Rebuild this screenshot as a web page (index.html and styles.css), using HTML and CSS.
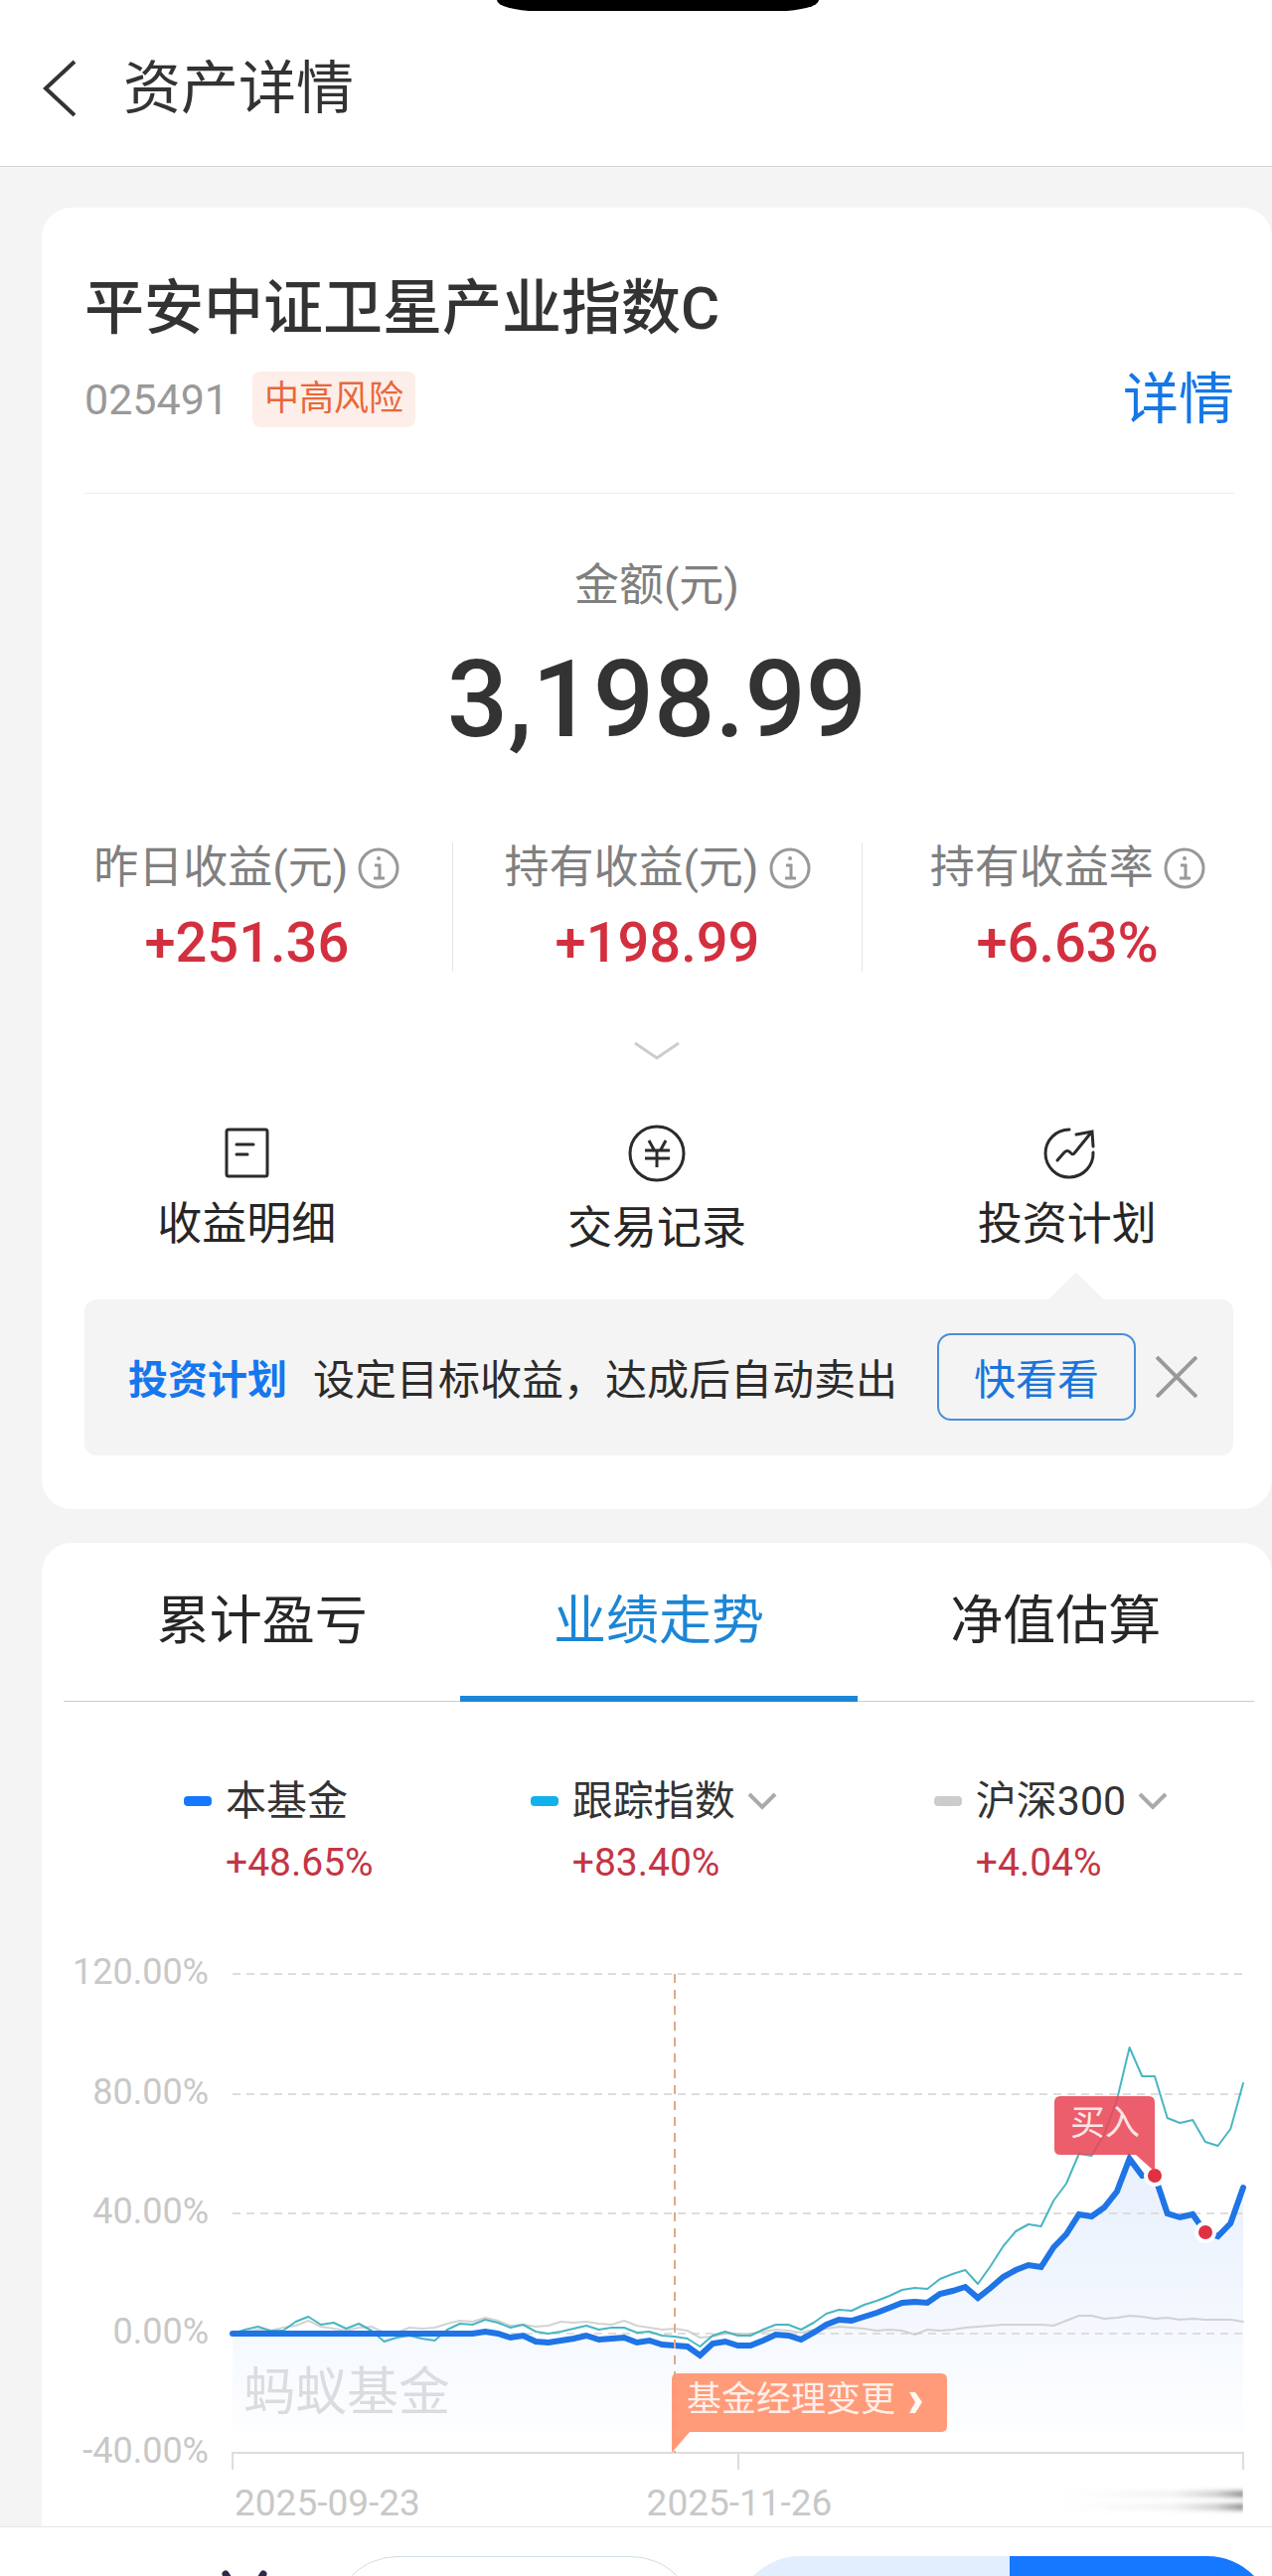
FILE: index.html
```html
<!DOCTYPE html>
<html lang="zh-CN">
<head>
<meta charset="utf-8">
<meta name="viewport" content="width=device-width, initial-scale=1">
<title>资产详情</title>
<link rel="stylesheet" href="styles.css">
</head>
<body>
<div class="island"></div>
<header class="topbar">
  <button class="icon-button back" type="button" aria-label="返回">
    <svg width="36" height="58" viewBox="0 0 36 58"><path d="M33 2L4 29L33 56" fill="none" stroke="#333" stroke-width="4"/></svg>
  </button>
  <h1 class="topbar-title">资产详情</h1>
</header>

<main class="page">
  <section class="card">
    <div class="fund">
      <h2 class="fund-name">平安中证卫星产业指数C</h2>
      <div class="fund-meta">
        <span class="fund-code">025491</span>
        <span class="risk">中高风险</span>
        <a class="detail-link" href="#detail">详情</a>
      </div>
    </div>

    <div class="amount">
      <div class="amount-label">金额(元)</div>
      <div class="amount-value">3,198.99</div>
    </div>

    <div class="columns stats">
      <div class="stat">
        <div class="stat-label">昨日收益(元)
          <svg class="info" viewBox="0 0 42 42"><circle cx="21" cy="21" r="19"/><path d="M17 18h5v13M16 31h11"/><circle class="dot" cx="21" cy="11" r="2"/></svg>
        </div>
        <div class="stat-value">+251.36</div>
      </div>
      <div class="stat">
        <div class="stat-label">持有收益(元)
          <svg class="info" viewBox="0 0 42 42"><circle cx="21" cy="21" r="19"/><path d="M17 18h5v13M16 31h11"/><circle class="dot" cx="21" cy="11" r="2"/></svg>
        </div>
        <div class="stat-value">+198.99</div>
      </div>
      <div class="stat">
        <div class="stat-label">持有收益率
          <svg class="info" viewBox="0 0 42 42"><circle cx="21" cy="21" r="19"/><path d="M17 18h5v13M16 31h11"/><circle class="dot" cx="21" cy="11" r="2"/></svg>
        </div>
        <div class="stat-value">+6.63%</div>
      </div>
    </div>

    <button class="icon-button expand" type="button" aria-label="展开">
      <svg width="46" height="18" viewBox="0 0 46 18"><path d="M1 1L23 16L45 1" fill="none" stroke="#ccc" stroke-width="3"/></svg>
    </button>

    <nav class="columns actions">
      <a class="action" href="#income">
        <svg width="60" height="60" viewBox="0 0 60 60"><rect x="10" y="6" width="41" height="47" rx="2"/><path d="M20 21h17M20 31h11" stroke-linecap="round"/></svg>
        <span>收益明细</span>
      </a>
      <a class="action" href="#trades">
        <svg width="60" height="64" viewBox="0 0 60 64"><circle cx="30" cy="30" r="27"/><path d="M22 17L28 28M39 17L33 28M18 27h25M18 35h25M30 27v17"/></svg>
        <span>交易记录</span>
      </a>
      <a class="action" href="#plan">
        <svg width="60" height="60" viewBox="0 0 60 60"><path d="M32 6A24 24 0 1 0 56 29M39 11L55 8L56 23M54 9L37 30Q35 32 33 29Q30 26 27 29L20 37" stroke-linecap="round"/></svg>
        <span>投资计划</span>
      </a>
    </nav>

    <div class="tip">
      <strong class="tip-title">投资计划</strong>
      <span class="tip-text">设定目标收益，达成后自动卖出</span>
      <button class="tip-button" type="button">快看看</button>
      <button class="icon-button tip-close" type="button" aria-label="关闭">
        <svg width="42" height="42" viewBox="0 0 42 42"><path d="M1 1L41 41M41 1L1 41" fill="none" stroke="#999" stroke-width="4"/></svg>
      </button>
    </div>
  </section>

  <section class="card performance">
    <div class="tabs" role="tablist">
      <button class="tab" type="button" role="tab" aria-selected="false">累计盈亏</button>
      <button class="tab active" type="button" role="tab" aria-selected="true">业绩走势</button>
      <button class="tab" type="button" role="tab" aria-selected="false">净值估算</button>
    </div>

    <div class="legend">
      <div class="series">
        <i class="swatch fund-swatch"></i>
        <span class="series-name">本基金</span>
        <span class="series-value">+48.65%</span>
      </div>
      <div class="series">
        <i class="swatch index-swatch"></i>
        <span class="series-name">跟踪指数
          <svg width="30" height="18" viewBox="0 0 30 18"><path d="M2 2L15 15L28 2"/></svg></span>
        <span class="series-value">+83.40%</span>
      </div>
      <div class="series">
        <i class="swatch csi-swatch"></i>
        <span class="series-name">沪深300
          <svg width="30" height="18" viewBox="0 0 30 18"><path d="M2 2L15 15L28 2"/></svg></span>
        <span class="series-value">+4.04%</span>
      </div>
    </div>

    <svg class="chart" viewBox="42 1930 1238 613" role="img" aria-label="业绩走势">
      <defs>
        <linearGradient id="area" gradientUnits="userSpaceOnUse" x1="0" y1="2170" x2="0" y2="2450">
          <stop offset="0" stop-color="#e8f0fd"/>
          <stop offset="0.6" stop-color="#f4f8fe"/>
          <stop offset="1" stop-color="#fdfeff"/>
        </linearGradient>
        <linearGradient id="fade">
          <stop offset="0" stop-color="#999" stop-opacity="0"/>
          <stop offset="0.6" stop-color="#999" stop-opacity="0.12"/>
          <stop offset="0.85" stop-color="#888" stop-opacity="0.4"/>
          <stop offset="1" stop-color="#888" stop-opacity="0.9"/>
        </linearGradient>
        <filter id="soft" x="-10%" y="-50%" width="110%" height="200%"><feGaussianBlur stdDeviation="1 2"/></filter>
      </defs>
      <polygon id="fund-area" fill="url(#area)"/>
      <path class="grid" d="M234 1987H1251M234 2108H1251M234 2228H1251M234 2349H1251"/>
      <path class="axis" d="M234 2486V2469H1251V2486M743 2469V2486"/>
      <g class="axis-label" text-anchor="end">
        <text x="210" y="1997">120.00%</text>
        <text x="210" y="2118">80.00%</text>
        <text x="210" y="2238">40.00%</text>
        <text x="210" y="2359">0.00%</text>
        <text x="210" y="2479">-40.00%</text>
      </g>
      <g class="axis-label date">
        <text x="236" y="2532">2025-09-23</text>
        <text x="744" y="2532" text-anchor="middle">2025-11-26</text>
      </g>
      <g filter="url(#soft)">
        <rect x="1070" y="2507" width="181" height="7" fill="url(#fade)"/>
        <rect x="1070" y="2520" width="181" height="7" fill="url(#fade)"/>
      </g>
      <text class="watermark" x="245" y="2426">蚂蚁基金</text>
      <polyline id="csi-line" class="line csi-line"/>
      <polyline id="index-line" class="line index-line"/>
      <polyline id="fund-line" class="line fund-line"/>
      <path class="event-line" d="M679 1987V2469"/>
      <g class="trade-dot">
        <circle cx="1162" cy="2190" r="9"/>
        <circle cx="1213" cy="2247" r="9"/>
      </g>
      <g class="tag buy-tag">
        <path d="M1067 2110H1156Q1162 2110 1162 2116V2186L1143 2169H1067Q1061 2169 1061 2163V2116Q1061 2110 1067 2110Z"/>
        <text x="1077" y="2149">买入</text>
      </g>
      <g class="tag manager-tag">
        <path d="M682 2389H947Q953 2389 953 2395V2442Q953 2448 947 2448H694L676 2469V2395Q676 2389 682 2389Z"/>
        <text x="691" y="2427">基金经理变更</text>
        <path class="arrow" d="M915 2408H921L928 2418L921 2429H915L921 2418Z"/>
      </g>
    </svg>
  </section>
</main>

<footer class="bottombar">
  <button class="icon-button mascot" type="button" aria-label="客服">
    <svg width="50" height="60" viewBox="0 0 50 60"><path d="M6 4L20 26M44 4L30 26" fill="none" stroke="#2b2b4a" stroke-width="7" stroke-linecap="round"/></svg>
  </button>
  <button class="pill outline" type="button" aria-label="卖出"></button>
  <div class="pill-pair">
    <button class="half light" type="button" aria-label="定投"></button>
    <button class="half solid" type="button" aria-label="买入"></button>
  </div>
</footer>
<script src="chart.js"></script>
</body>
</html>
```
FILE: styles.css
```css
* { box-sizing: border-box; }

body {
  margin: 0;
  background: #f4f4f4;
  color: #333;
  font-family: Roboto, "Noto Sans CJK SC", sans-serif;
}

h1, h2 { margin: 0; font-weight: 400; }
a { color: inherit; text-decoration: none; }
button { font: inherit; color: inherit; }
svg { display: block; flex: none; }

.icon-button {
  display: block;
  padding: 0;
  border: 0;
  background: none;
}

.island {
  position: absolute;
  top: 0;
  left: 500px;
  width: 324px;
  height: 11px;
  background: #000;
  border-radius: 0 0 40px 40px / 0 0 11px 11px;
}

.topbar {
  display: flex;
  align-items: center;
  gap: 46px;
  padding: 47px 42px 36px;
  background: #fff;
  border-bottom: 1px solid #d4d4d4;
}
.topbar-title { font-size: 58px; line-height: 84px; }

.page { padding: 41px 0 0 42px; }

.card {
  padding: 62px 0 54px;
  background: #fff;
  border-radius: 30px;
}

.fund {
  margin: 0 38px 0 43px;
  padding-bottom: 66px;
  border-bottom: 1px solid #eee;
}
.fund-name { font-size: 60px; line-height: 80px; font-weight: 500; }
.fund-meta {
  display: flex;
  align-items: center;
  gap: 24px;
  height: 56px;
  margin-top: 23px;
}
.fund-code { font-size: 43px; line-height: 60px; color: #999; }
.risk {
  padding: 0 12px;
  border-radius: 8px;
  background: #fdeee9;
  color: #e8683a;
  font-size: 35px;
  line-height: 56px;
}
.detail-link { margin-left: auto; color: #1677e6; font-size: 56px; line-height: 60px; }

.amount { margin-top: 61px; text-align: center; }
.amount-label { color: #808080; font-size: 45px; line-height: 64px; }
.amount-value { margin-top: 22px; font-size: 108px; line-height: 120px; font-weight: 500; }

.columns { display: grid; grid-template-columns: repeat(3, 1fr); }

.stats { margin-top: 84px; text-align: center; }
.stat + .stat { border-left: 1px solid #e6e6e6; }
.stat-label {
  display: flex;
  align-items: center;
  justify-content: center;
  gap: 10px;
  color: #808080;
  font-size: 45px;
  line-height: 52px;
}
.stat-value {
  margin-top: 20px;
  color: #d2303f;
  font-size: 56px;
  line-height: 58px;
  font-weight: 500;
}
.info { width: 42px; height: 42px; fill: none; stroke: #999; stroke-width: 3; }
.info .dot { fill: #999; stroke: none; }

.expand { margin: 71px auto 0; }

.actions { margin-top: 64px; }
.action {
  display: flex;
  flex-direction: column;
  align-items: center;
  gap: 12px;
  color: #262626;
  font-size: 45px;
  line-height: 60px;
}
.action svg { fill: none; stroke: #2b2b2b; stroke-width: 3; }

.tip {
  position: relative;
  display: flex;
  align-items: center;
  margin: 41px 39px 0 43px;
  padding: 34px 36px 35px 44px;
  border-radius: 12px;
  background: #f4f4f4;
  font-family: "Noto Sans CJK SC", sans-serif;
  line-height: 88px;
}
.tip::before {
  content: "";
  position: absolute;
  right: 130px;
  bottom: 100%;
  border: solid transparent;
  border-width: 0 28px 27px;
  border-bottom-color: #f4f4f4;
}
.tip-title { color: #1677ee; font-size: 40px; }
.tip-text { margin-left: 26px; color: #2b2b2b; font-size: 42px; white-space: nowrap; }
.tip-button {
  flex: none;
  width: 200px;
  margin-left: auto;
  padding: 0;
  border: 2px solid #4a90d9;
  border-radius: 14px;
  background: none;
  color: #1a74dc;
  font-size: 42px;
  line-height: 84px;
}
.tip-close { margin-left: 20px; }

.performance {
  margin-top: 34px;
  padding: 0;
  border-radius: 30px 30px 0 0;
}
.tabs {
  display: flex;
  margin: 0 18px 0 22px;
  box-shadow: inset 0 -1px #ccc;
}
.tab {
  flex: 1;
  padding: 39px 0 35px;
  border: 0;
  border-bottom: 6px solid transparent;
  background: none;
  color: #262626;
  font-size: 53px;
  line-height: 80px;
}
.tab.active { border-color: #1c86d6; color: #1c86d6; }

.legend {
  display: flex;
  justify-content: space-between;
  margin-top: 75px;
  padding: 0 105px 0 143px;
}
.series {
  display: grid;
  grid-template-columns: 28px auto;
  column-gap: 14px;
  row-gap: 12px;
  align-items: center;
  line-height: 50px;
}
.swatch { height: 10px; border-radius: 4px; }
.fund-swatch { background: #1677ff; }
.index-swatch { background: #12b0ec; }
.csi-swatch { background: #ccc; }
.series-name { display: flex; align-items: center; gap: 12px; font-size: 41px; }
.series-name svg { fill: none; stroke: #aaa; stroke-width: 4; }
.series-value { grid-column: 2; color: #c43545; font-size: 39px; }

.chart { width: 100%; height: auto; margin-top: 30px; }
.grid { fill: none; stroke: #ddd; stroke-width: 2; stroke-dasharray: 8 6; }
.axis { fill: none; stroke: #ddd; stroke-width: 2; }
.axis-label { fill: #c8c8c8; font-size: 36px; }
.date { font-size: 37px; }
.watermark { fill: #dadce0; font-size: 52px; }
.line { fill: none; stroke-linejoin: round; stroke-linecap: round; }
.csi-line { stroke: #c8c8c8; stroke-width: 2; stroke-opacity: 0.8; }
.index-line { stroke: #35aebb; stroke-width: 2; stroke-opacity: 0.9; }
.fund-line { stroke: #1f74e6; stroke-width: 6; stroke-linejoin: miter; }
.event-line { stroke: #e0a98c; stroke-width: 2; stroke-dasharray: 9 7; }
.trade-dot { fill: #e03142; stroke: #fff; stroke-width: 4; }
.tag text { font-size: 35px; fill: #fff; fill-opacity: 0.85; }
.buy-tag path { fill: #e94856; fill-opacity: 0.88; }
.manager-tag path { fill: #ff936f; fill-opacity: 0.93; }
.manager-tag .arrow { fill: #fff; }

.bottombar {
  display: flex;
  align-items: flex-start;
  height: 50px;
  padding: 29px 0 0 221px;
  overflow: hidden;
  background: #fff;
  border-top: 1px solid #e6e6e6;
}
.mascot { padding-top: 14px; }
.pill { height: 130px; border-radius: 65px; background: #fff; }
.outline { flex: 356; margin-left: 64px; border: 1px solid #cfdde3; }
.pill-pair {
  flex: 549;
  display: flex;
  height: 130px;
  margin-left: 40px;
  border-radius: 65px;
  overflow: hidden;
}
.half { border: 0; }
.light { flex: 281; background: #e2eefe; }
.solid { flex: 268; background: #1677ff; }
```
FILE: chart.js
```js
// Daily readings, in chart units on the vertical axis (0% is 2349, 40% is 2228).
const fund = [
  2349, 2349, 2349, 2349, 2349, 2349, 2349, 2349, 2349, 2349, 2349, 2349, 2349, 2349, 2349, 2349, 2349, 2349, 2349, 2349,
  2347, 2349, 2353, 2351, 2357, 2358, 2356, 2354, 2351, 2355, 2354, 2353, 2358, 2356, 2360, 2361, 2362, 2371, 2359, 2357,
  2361, 2361, 2356, 2350, 2351, 2355, 2348, 2340, 2335, 2336, 2332, 2328, 2323, 2318, 2317, 2318, 2309, 2306, 2302, 2313,
  2303, 2292, 2285, 2280, 2282, 2262, 2249, 2229, 2231, 2222, 2206, 2173, 2190, 2190, 2228, 2232, 2229, 2247, 2251, 2238, 2202
];
const index = [
  2349, 2345, 2342, 2346, 2346, 2337, 2332, 2340, 2338, 2344, 2339, 2346, 2357, 2353, 2351, 2354, 2356, 2345, 2339, 2340,
  2335, 2338, 2343, 2340, 2347, 2349, 2347, 2344, 2341, 2345, 2343, 2343, 2348, 2347, 2351, 2352, 2354, 2362, 2351, 2347,
  2351, 2351, 2345, 2340, 2340, 2345, 2338, 2329, 2325, 2326, 2320, 2316, 2311, 2305, 2303, 2304, 2294, 2289, 2285, 2299,
  2281, 2261, 2246, 2239, 2241, 2215, 2198, 2168, 2170, 2148, 2114, 2061, 2090, 2090, 2132, 2137, 2134, 2156, 2160, 2143, 2097
];
const csi = [
  2349, 2347, 2345, 2346, 2343, 2341, 2336, 2342, 2344, 2346, 2343, 2342, 2348, 2348, 2343, 2344, 2343, 2339, 2336, 2337,
  2333, 2336, 2341, 2340, 2342, 2341, 2337, 2338, 2337, 2339, 2340, 2336, 2341, 2343, 2345, 2344, 2346, 2353, 2352, 2349,
  2349, 2349, 2347, 2345, 2346, 2348, 2345, 2344, 2342, 2343, 2344, 2346, 2345, 2346, 2350, 2345, 2346, 2345, 2343, 2342,
  2341, 2340, 2340, 2340, 2340, 2341, 2336, 2331, 2331, 2334, 2333, 2331, 2332, 2334, 2333, 2335, 2334, 2335, 2335, 2335, 2337
];

const left = 234;
const right = 1251;
const floor = 2450;

function toPoints(values) {
  const step = (right - left) / (values.length - 1);
  return values.map((y, i) => (left + i * step).toFixed(1) + "," + y).join(" ");
}

document.getElementById("fund-line").setAttribute("points", toPoints(fund));
document.getElementById("index-line").setAttribute("points", toPoints(index));
document.getElementById("csi-line").setAttribute("points", toPoints(csi));
document.getElementById("fund-area").setAttribute(
  "points", left + "," + floor + " " + toPoints(fund) + " " + right + "," + floor
);
```
